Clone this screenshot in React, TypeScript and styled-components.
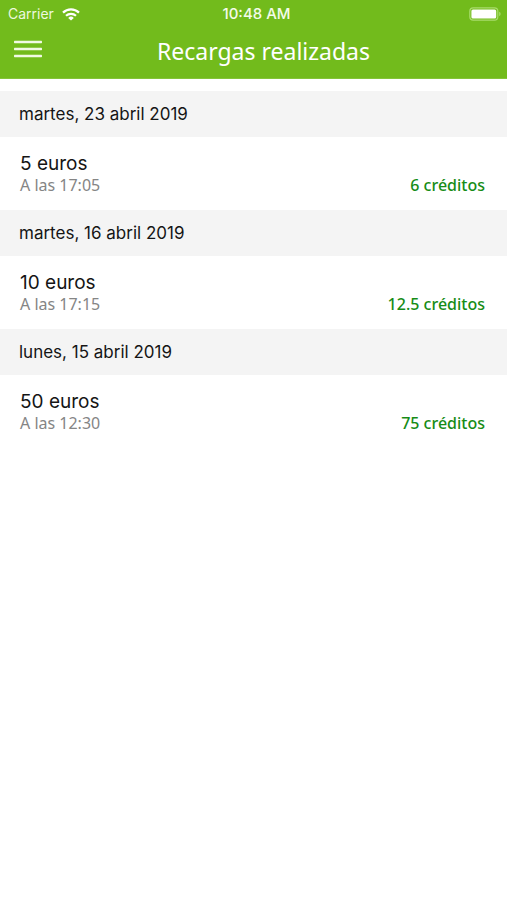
import React from 'react';
import styled, { createGlobalStyle } from 'styled-components';

const GlobalStyle = createGlobalStyle`
  *, *::before, *::after { box-sizing: border-box; }
  body {
    margin: 0;
    background: #fff;
    color: #151515;
    font-family: Inter, "Liberation Sans", sans-serif;
  }
  h1, h2, p, ul { margin: 0; padding: 0; }
`;

const humanist = '"Noto Sans", "Open Sans", sans-serif';

const Header = styled.header`
  background: #72bb1c;
  color: #fff;
  border-bottom: 1px solid #84c438;
`;

const StatusBar = styled.div`
  display: grid;
  grid-template-columns: 1fr auto 1fr;
  align-items: center;
  height: 28px;
  padding: 0 2px 0 8px;
  font-size: 14px;
  line-height: 20px;
`;

const Carrier = styled.span`
  display: flex;
  align-items: center;
  gap: 8px;
  color: #edf8df;
`;

const Clock = styled.time`
  font-size: 15px;
  font-weight: 500;
  color: #f4fbea;
`;

const Battery = styled.svg`
  justify-self: end;
  display: block;
  margin-right: 4px;
`;

const NavBar = styled.div`
  display: grid;
  grid-template-columns: 56px 1fr 36px;
  align-items: center;
  height: 50px;
  padding-bottom: 8px;
`;

const MenuButton = styled.button`
  display: flex;
  align-items: center;
  height: 42px;
  padding: 0 14px;
  border: 0;
  background: none;
  color: #f1fae4;
  cursor: pointer;
`;

const Title = styled.h1`
  padding-top: 4px;
  font: 400 23px/32px ${humanist};
  text-align: center;
`;

const List = styled.main`
  padding-top: 12px;
`;

const DayHeading = styled.h2`
  padding: 12px 19px 11px;
  background: #f4f4f4;
  font-size: 17px;
  font-weight: 400;
  line-height: 23px;
`;

const Entries = styled.ul`
  list-style: none;
`;

const Entry = styled.li`
  display: flex;
  align-items: flex-end;
  justify-content: space-between;
  padding: 15px 22px 16px 20px;
`;

const Amount = styled.p`
  font-size: 19px;
  line-height: 24px;
`;

const Time = styled.p`
  font: 400 16px/18px ${humanist};
  color: #858585;
`;

const Credits = styled.p`
  font: 500 16px/18px ${humanist};
  color: #168c16;
`;

const days = [
  { date: 'martes, 23 abril 2019', amount: '5 euros', time: 'A las 17:05', credits: '6 créditos' },
  { date: 'martes, 16 abril 2019', amount: '10 euros', time: 'A las 17:15', credits: '12.5 créditos' },
  { date: 'lunes, 15 abril 2019', amount: '50 euros', time: 'A las 12:30', credits: '75 créditos' },
];

export default function App() {
  return (
    <>
      <GlobalStyle />
      <Header>
        <StatusBar>
          <Carrier>
            Carrier
            <svg width="18" height="13" viewBox="0 0 18 13" fill="none" stroke="#fff" strokeWidth="2.2" aria-hidden="true">
              <path d="M1 4.6a11.4 11.4 0 0 1 16 0" />
              <path d="M4 7.8a7.2 7.2 0 0 1 10 0" />
              <path d="M9 12.6 6.2 9.9a4 4 0 0 1 5.6 0Z" fill="#fff" stroke="none" />
            </svg>
          </Carrier>
          <Clock>10:48 AM</Clock>
          <Battery width="32" height="14" viewBox="0 0 32 14" aria-hidden="true">
            <rect x="0.8" y="0.8" width="28" height="12.4" rx="3.4" fill="none" stroke="#a9dc6c" strokeWidth="1.2" />
            <rect x="2.4" y="2.4" width="24.8" height="9.2" rx="1.6" fill="#fff" />
            <path d="M30.2 4.8a2.4 2.4 0 0 1 0 4.4Z" fill="#a9dc6c" />
          </Battery>
        </StatusBar>
        <NavBar>
          <MenuButton type="button" aria-label="Menú">
            <svg width="28" height="18" viewBox="0 0 28 18" fill="currentColor" aria-hidden="true">
              <rect y="0.8" width="28" height="2.4" rx="0.6" />
              <rect y="7.8" width="28" height="2.4" rx="0.6" />
              <rect y="14.8" width="28" height="2.4" rx="0.6" />
            </svg>
          </MenuButton>
          <Title>Recargas realizadas</Title>
        </NavBar>
      </Header>
      <List>
        {days.map((day) => (
          <section key={day.date}>
            <DayHeading>{day.date}</DayHeading>
            <Entries>
              <Entry>
                <div>
                  <Amount>{day.amount}</Amount>
                  <Time>{day.time}</Time>
                </div>
                <Credits>{day.credits}</Credits>
              </Entry>
            </Entries>
          </section>
        ))}
      </List>
    </>
  );
}
